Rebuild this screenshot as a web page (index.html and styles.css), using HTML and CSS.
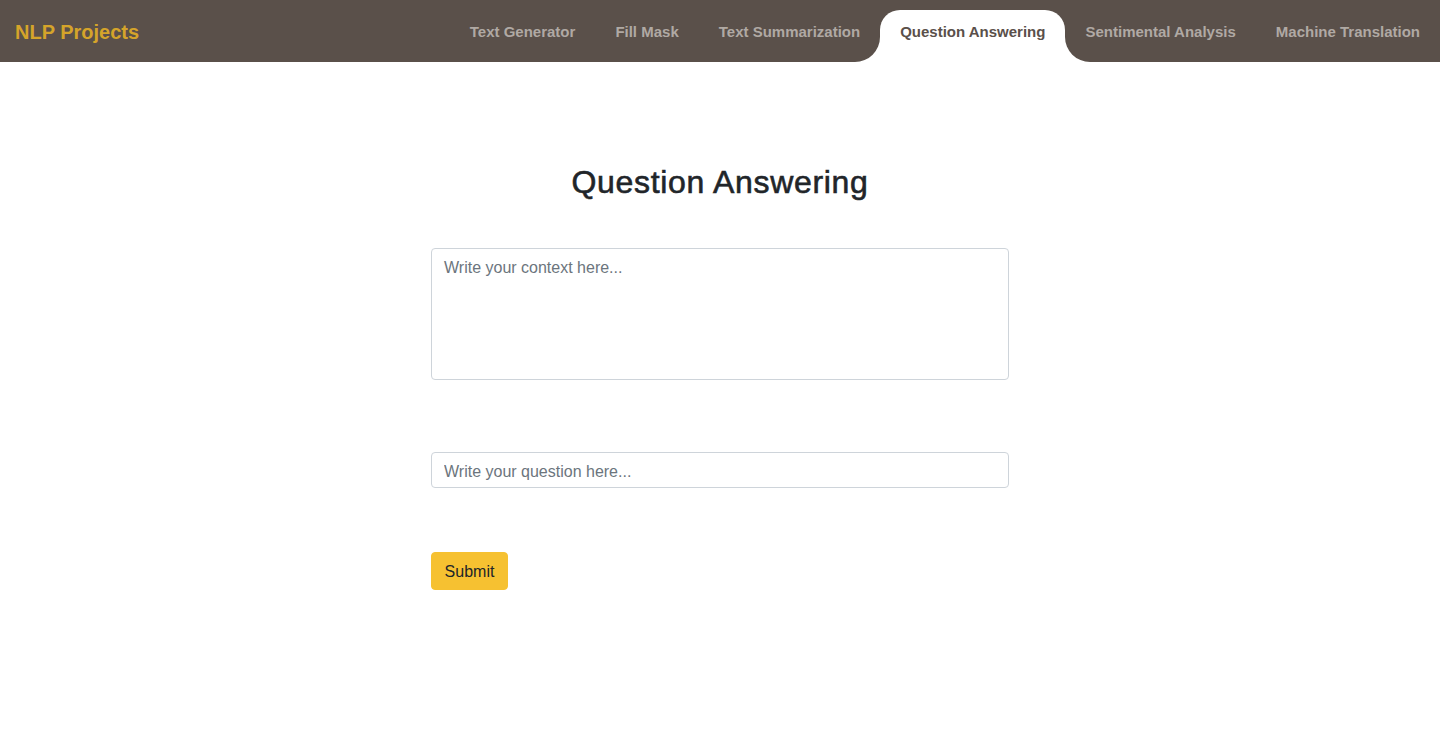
FILE: index.html
```html
<!DOCTYPE html>
<html lang="en">
<head>
<meta charset="utf-8">
<title>NLP Projects</title>
<link rel="stylesheet" href="styles.css">
</head>
<body>
<nav class="navbar">
  <a class="brand" href="#">NLP Projects</a>
  <ul class="nav-links">
    <li><a class="nav-link" href="#">Text Generator</a></li>
    <li><a class="nav-link" href="#">Fill Mask</a></li>
    <li><a class="nav-link" href="#">Text Summarization</a></li>
    <li><a class="nav-link active" href="#">Question Answering</a></li>
    <li><a class="nav-link" href="#">Sentimental Analysis</a></li>
    <li><a class="nav-link" href="#">Machine Translation</a></li>
  </ul>
</nav>
<main class="content">
  <h1 class="title">Question Answering</h1>
  <form class="qa-form">
    <textarea class="form-control context" placeholder="Write your context here..."></textarea>
    <input class="form-control question" type="text" placeholder="Write your question here...">
    <div class="actions">
      <button class="btn-submit" type="button">Submit</button>
    </div>
  </form>
</main>
</body>
</html>
```
FILE: styles.css
```css
* { box-sizing: border-box; }
html, body { margin: 0; padding: 0; }
body {
  font-family: "Liberation Sans", Arial, Helvetica, sans-serif;
  background: #ffffff;
  color: #212529;
}
.navbar {
  display: flex;
  align-items: flex-end;
  justify-content: space-between;
  height: 62px;
  background: #5a504a;
  padding-left: 15px;
}
.brand {
  align-self: center;
  color: #d5a42a;
  font-weight: 700;
  font-size: 20px;
  text-decoration: none;
  margin-top: 3px;
}
.nav-links {
  display: flex;
  list-style: none;
  margin: 0;
  padding: 0;
  height: 52px;
}
.nav-links li { display: flex; }
.nav-link {
  position: relative;
  display: flex;
  align-items: center;
  padding: 0 20px 10px;
  color: #b0a9a4;
  font-weight: 700;
  font-size: 15px;
  text-decoration: none;
}
.nav-link.active {
  background: #ffffff;
  color: #5a504a;
  border-radius: 20px 20px 0 0;
}
.nav-link.active::before,
.nav-link.active::after {
  content: "";
  position: absolute;
  bottom: 0;
  width: 25px;
  height: 25px;
  background: transparent;
}
.nav-link.active::before {
  right: 100%;
  border-bottom-right-radius: 25px;
  box-shadow: 10px 10px 0 10px #ffffff;
}
.nav-link.active::after {
  left: 100%;
  border-bottom-left-radius: 25px;
  box-shadow: -10px 10px 0 10px #ffffff;
}
.content {
  width: 578px;
  margin: 0 auto;
  padding-top: 101px;
}
.title {
  margin: 0 0 47px;
  text-align: center;
  font-size: 32px;
  font-weight: 400;
  -webkit-text-stroke: 0.6px #212529;
  letter-spacing: 0.7px;
  line-height: 38px;
  color: #212529;
}
.qa-form {
  display: flex;
  flex-direction: column;
}
.form-control {
  display: block;
  width: 100%;
  font-family: inherit;
  font-size: 16px;
  line-height: 22px;
  color: #212529;
  border: 1px solid #ced4da;
  border-radius: 4px;
  padding: 6px 12px;
  background: #ffffff;
  outline: none;
}
.form-control::placeholder { color: #6c757d; }
.context {
  height: 132px;
  resize: none;
  padding-top: 8px;
}
.question {
  height: 36px;
  margin-top: 72px;
  padding-top: 8px;
  padding-bottom: 4px;
}
.actions {
  margin-top: 64px;
}
.btn-submit {
  font-family: inherit;
  font-size: 16px;
  line-height: 22px;
  color: #212529;
  background: #f6c131;
  border: 1px solid #f6c131;
  border-radius: 4px;
  padding: 8px 12px 6px;
  height: 38px;
  width: 77px;
  cursor: pointer;
}
```
